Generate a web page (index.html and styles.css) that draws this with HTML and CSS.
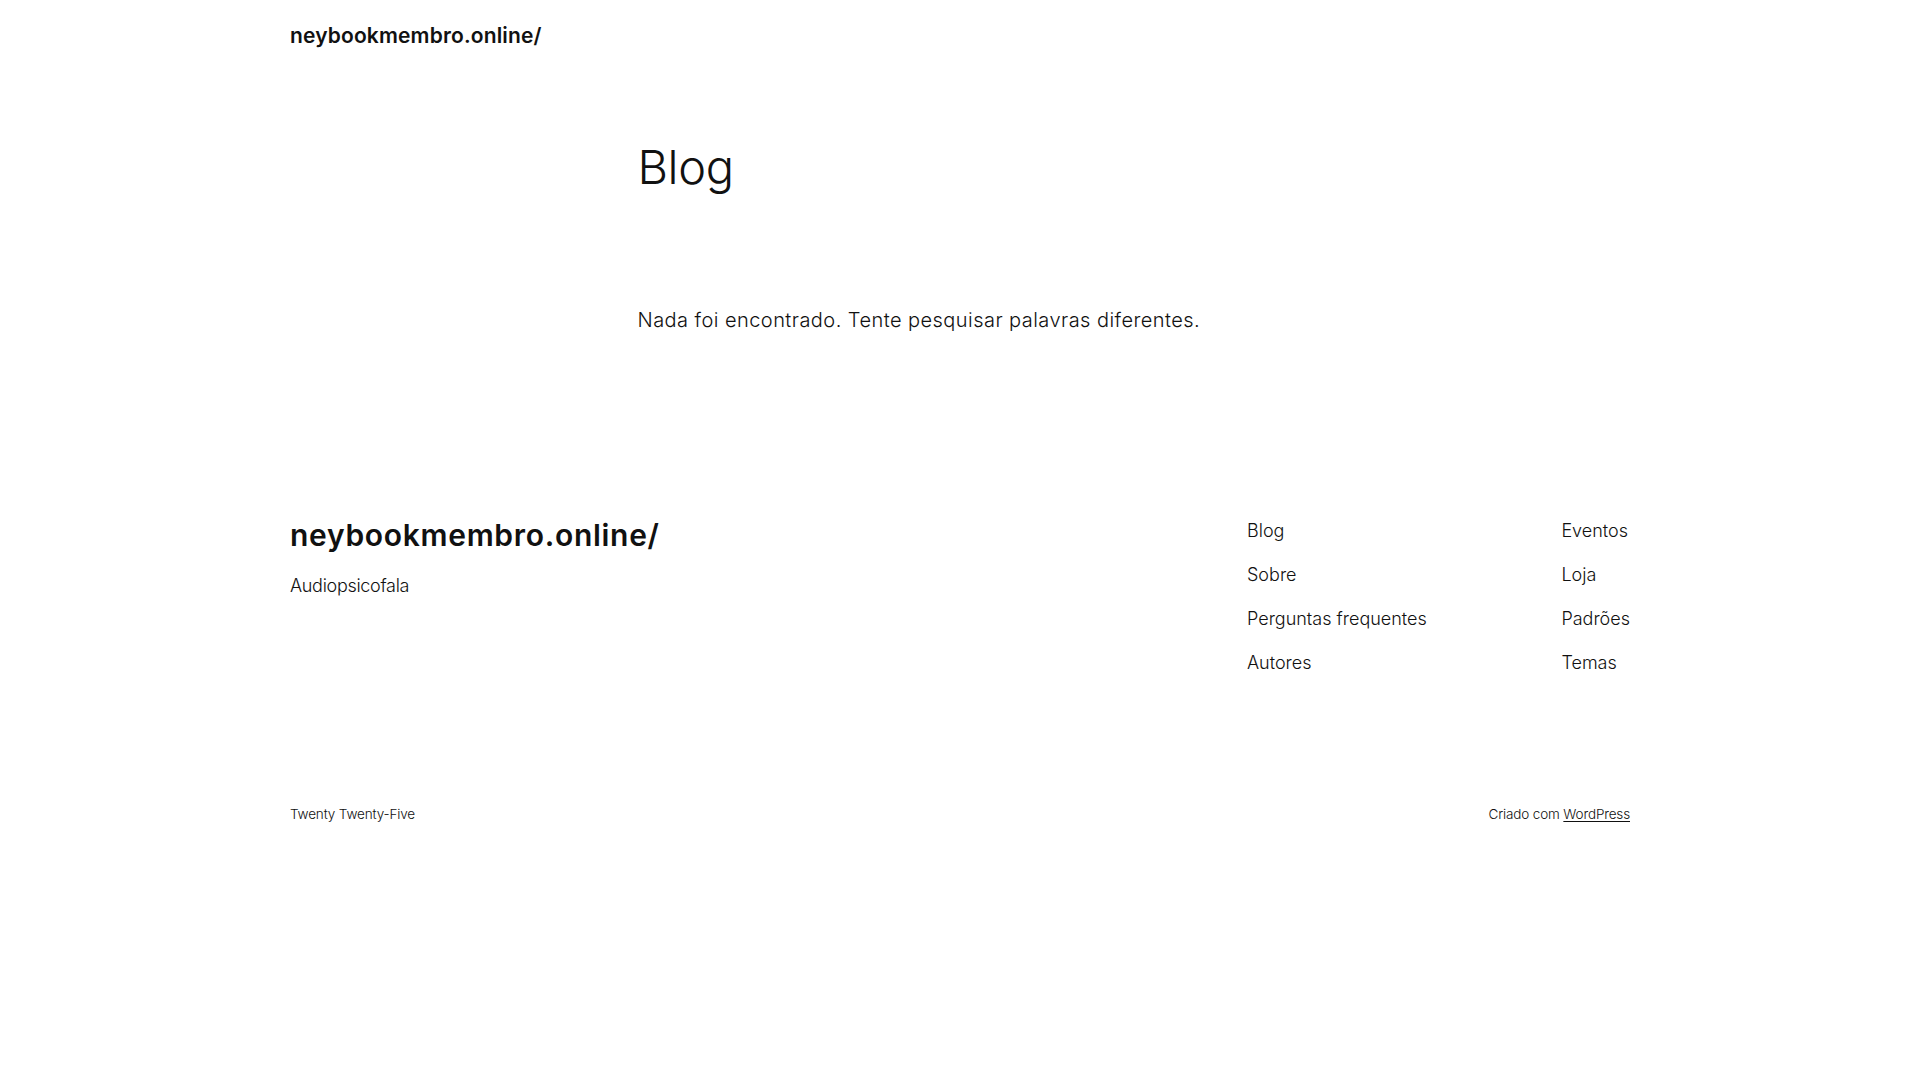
FILE: index.html
```html
<!DOCTYPE html>
<html lang="pt-BR">
<head>
<meta charset="utf-8">
<title>Blog – neybookmembro.online/</title>
<link rel="stylesheet" href="styles.css">
</head>
<body>
<header class="site-header">
  <div class="wide">
    <a class="header-title" href="#">neybookmembro.online/</a>
  </div>
</header>
<main class="site-main">
  <div class="content">
    <h1 class="page-title">Blog</h1>
    <p class="no-results">Nada foi encontrado. Tente pesquisar palavras diferentes.</p>
  </div>
</main>
<footer class="site-footer">
  <div class="wide footer-top">
    <div class="brand">
      <a class="footer-title" href="#">neybookmembro.online/</a>
      <p class="tagline">Audiopsicofala</p>
    </div>
    <nav class="footer-nav">
      <ul class="nav-col">
        <li><a href="#">Blog</a></li>
        <li><a href="#">Sobre</a></li>
        <li><a href="#">Perguntas frequentes</a></li>
        <li><a href="#">Autores</a></li>
      </ul>
      <ul class="nav-col">
        <li><a href="#">Eventos</a></li>
        <li><a href="#">Loja</a></li>
        <li><a href="#">Padrões</a></li>
        <li><a href="#">Temas</a></li>
      </ul>
    </nav>
  </div>
  <div class="wide footer-bottom">
    <span>Twenty Twenty-Five</span>
    <span>Criado com <a class="wp-link" href="#">WordPress</a></span>
  </div>
</footer>
</body>
</html>
```

FILE: styles.css
```css
html, body {
  margin: 0;
  padding: 0;
  background: #ffffff;
}
body {
  font-family: Inter, "Noto Sans", "Liberation Sans", sans-serif;
  color: #111111;
}
a {
  color: #111111;
  text-decoration: none;
}
.wide {
  width: 1340px;
  margin: 0 auto;
}
.site-header {
  padding-top: 21px;
}
.header-title {
  display: block;
  font-size: 21px;
  line-height: 29px;
  font-weight: 600;
  letter-spacing: 0.15px;
}
.site-main {
  padding-top: 89px;
}
.content {
  width: 645px;
  margin: 0 auto;
}
.page-title {
  margin: 0;
  font-size: 47px;
  line-height: 55px;
  font-weight: 300;
  letter-spacing: -0.4px;
}
.no-results {
  margin: 110px 0 0;
  font-size: 20px;
  line-height: 32px;
  font-weight: 300;
  letter-spacing: 0.45px;
}
.site-footer {
  padding-top: 177px;
}
.footer-top {
  display: flex;
  align-items: flex-start;
}
.brand {
  flex: 1;
  padding-top: 4px;
}
.footer-title {
  display: block;
  font-size: 30px;
  line-height: 36px;
  font-weight: 600;
  letter-spacing: 0.7px;
}
.tagline {
  margin: 19px 0 0;
  font-size: 18px;
  line-height: 27px;
  font-weight: 300;
  letter-spacing: -0.3px;
}
.footer-nav {
  width: 383px;
  display: grid;
  grid-template-columns: 1fr auto;
  padding-top: 4.2px;
}
.nav-col {
  list-style: none;
  margin: 0;
  padding: 0;
  display: flex;
  flex-direction: column;
  gap: 17px;
}
.nav-col li {
  font-size: 18px;
  line-height: 27px;
  font-weight: 300;
}
.footer-bottom {
  display: flex;
  justify-content: space-between;
  margin-top: 128px;
  font-size: 13.5px;
  line-height: 21px;
  font-weight: 300;
  letter-spacing: -0.15px;
}
.wp-link {
  text-decoration: underline;
  text-underline-offset: 2px;
}
```
